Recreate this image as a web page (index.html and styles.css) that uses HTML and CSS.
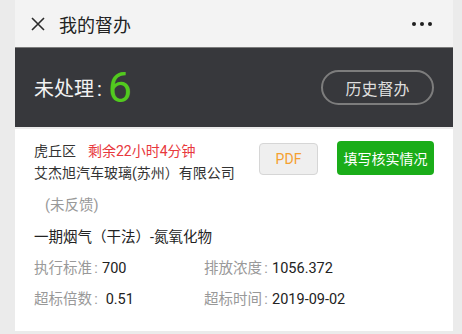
FILE: index.html
```html
<!DOCTYPE html>
<html lang="zh-CN">
<head>
    <meta charset="UTF-8">
    <title>我的督办</title>
    <link rel="stylesheet" href="styles.css">
</head>
<body>
<div class="page">
    <div class="topbar">
        <svg class="close" width="14" height="14" viewBox="0 0 14 14">
            <path d="M1 1L13 13M13 1L1 13" stroke="#2b2b2b" stroke-width="1.6" fill="none"/>
        </svg>
        <span class="title">我的督办</span>
        <span class="more"><i></i><i></i><i></i></span>
    </div>
    <div class="summary">
        <div class="count"><span class="count-label">未处理<span class="colon">:</span></span><span class="count-num">6</span></div>
        <button class="history">历史督办</button>
    </div>
    <div class="card">
        <div class="card-head">
            <div class="card-info">
                <div><span class="area">虎丘区</span><span class="remain">剩余22小时4分钟</span></div>
                <div>艾杰旭汽车玻璃(苏州）有限公司</div>
            </div>
            <div class="btns">
                <button class="btn-pdf">PDF</button>
                <button class="btn-fill">填写核实情况</button>
            </div>
        </div>
        <div class="status">(未反馈)</div>
        <div class="pollutant">一期烟气（干法）-氮氧化物</div>
        <div class="data">
            <div><span class="lbl">执行标准<span class="colon">:</span></span>700</div>
            <div><span class="lbl">排放浓度<span class="colon">:</span></span>1056.372</div>
            <div><span class="lbl">超标倍数<span class="colon">:</span></span> 0.51</div>
            <div><span class="lbl">超标时间<span class="colon">:</span></span>2019-09-02</div>
        </div>
    </div>
</div>
</body>
</html>
```
FILE: styles.css
```css
* {
    margin: 0;
    padding: 0;
    box-sizing: border-box;
}
html, body {
    width: 100%;
    height: 100%;
    background-color: #ebebeb;
    font-family: Roboto, "Noto Sans CJK SC", sans-serif;
    color: #333;
}
.page {
    width: 438px;
    margin-left: 15px;
}
.topbar {
    height: 47px;
    background-color: #f3f3f3;
    display: flex;
    align-items: center;
    padding: 0 21px 0 16px;
}
.close {
    display: block;
}
.title {
    margin-left: 14px;
    font-size: 18px;
    color: #222;
    flex: 1;
}
.more {
    display: flex;
    gap: 4px;
}
.more i {
    width: 4px;
    height: 4px;
    border-radius: 50%;
    background-color: #1e1e1e;
}
.colon {
    margin: 0 0.3em 0 0.15em;
}
.summary {
    height: 80px;
    background-color: #37383c;
    border-top: 1px solid #7c7c7c;
    display: flex;
    align-items: center;
    justify-content: space-between;
    padding: 0 19px;
}
.count {
    display: flex;
    align-items: center;
}
.count-label {
    font-size: 20px;
    color: #f2f2f2;
}
.count-num {
    font-size: 43px;
    color: #52c91e;
    line-height: 1;
}
.history {
    width: 113px;
    height: 35px;
    border: 2px solid #7d7d7d;
    border-radius: 18px;
    background: transparent;
    color: #dedede;
    font-family: inherit;
    font-size: 16px;
}
.card {
    margin-top: 2px;
    background-color: #fff;
    padding: 11px 19px 20px;
    font-size: 14.5px;
    line-height: 22px;
}
.card-head {
    display: flex;
    justify-content: space-between;
    align-items: flex-start;
}
.card-info {
    font-size: 14px;
}
.remain {
    color: #e8383d;
    margin-left: 12px;
}
.btns {
    display: flex;
    gap: 19px;
    align-items: flex-start;
}
.btns button {
    font-family: inherit;
    font-size: 14px;
    border-radius: 4px;
}
.btn-pdf {
    width: 59px;
    height: 32px;
    margin-top: 3px;
    border: 1px solid #d6d6d6;
    background-color: #efefef;
    color: #f5a030;
}
.btn-fill {
    width: 97px;
    height: 34px;
    margin-top: 1px;
    border: 0;
    background-color: #1aad19;
    color: #fff;
}
.status {
    margin-top: 11px;
    padding-left: 11px;
    color: #999;
}
.pollutant {
    margin-top: 10px;
    color: #222;
}
.data {
    margin-top: 9px;
    display: grid;
    grid-template-columns: 170px auto;
    row-gap: 9px;
    color: #222;
}
.lbl {
    color: #999;
}
```
